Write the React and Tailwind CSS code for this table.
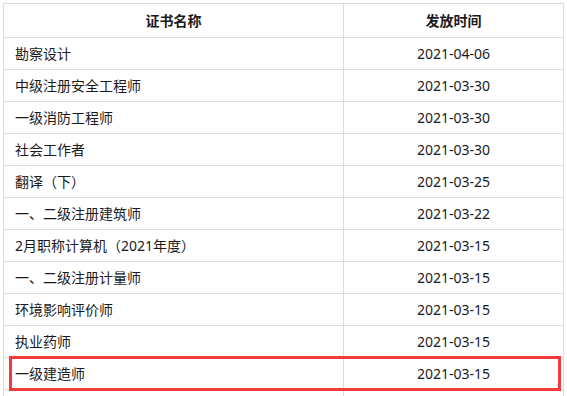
const rows = [
  ["勘察设计", "2021-04-06"],
  ["中级注册安全工程师", "2021-03-30"],
  ["一级消防工程师", "2021-03-30"],
  ["社会工作者", "2021-03-30"],
  ["翻译（下）", "2021-03-25"],
  ["一、二级注册建筑师", "2021-03-22"],
  ["2月职称计算机（2021年度）", "2021-03-15"],
  ["一、二级注册计量师", "2021-03-15"],
  ["环境影响评价师", "2021-03-15"],
  ["执业药师", "2021-03-15"],
  ["一级建造师", "2021-03-15"],
  ["", ""],
];

export default function App() {
  return (
    <div className="h-[396px] overflow-hidden bg-white pl-[3px] pt-[3px] font-['Noto_Sans','Noto_Sans_CJK_SC',sans-serif] text-[14px] text-[#1a1a1a]">
      <table className="w-[561px] table-fixed border-collapse">
        <colgroup>
          <col className="w-[340px]" />
          <col />
        </colgroup>
        <thead>
          <tr className="h-[34px]">
            <th className="border border-[#dcdcdc] text-center font-bold">证书名称</th>
            <th className="border border-[#dcdcdc] text-center font-bold">发放时间</th>
          </tr>
        </thead>
        <tbody>
          {rows.map(([name, date], i) => (
            <tr key={i} className="h-[32px]">
              <td className="relative border border-[#dcdcdc] px-[11px]">
                {name}
                {i === 10 && (
                  <div className="pointer-events-none absolute left-[5px] top-[-2px] h-[35px] w-[552px] border-[3px] border-[#f23a3c]" />
                )}
              </td>
              <td className="border border-[#dcdcdc] text-center">{date}</td>
            </tr>
          ))}
        </tbody>
      </table>
    </div>
  );
}
